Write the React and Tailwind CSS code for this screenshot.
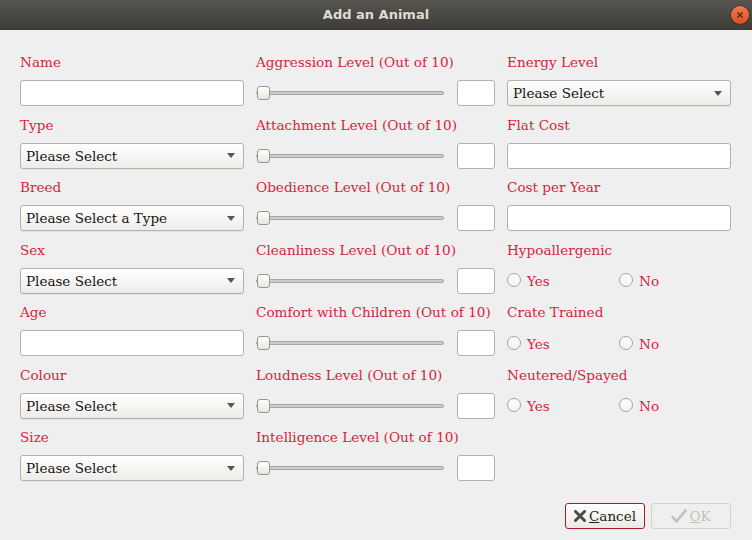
import React from 'react';

const serif = { fontFamily: '"DejaVu Serif", "Liberation Serif", serif' };

const Label = ({ children }) => (
  <div className="h-[18px] text-[13.6px] leading-[18px] text-[#d51f3e] whitespace-nowrap">{children}</div>
);

const TextInput = () => (
  <div className="h-[26px] w-full rounded-[3px] border border-[#b4b1ac] bg-white" />
);

const Select = ({ value = 'Please Select' }) => (
  <div className="flex h-[26px] w-full items-center justify-between rounded-[3px] border border-[#b4b1ac] bg-gradient-to-b from-white to-[#eeece9] pl-[5px] pr-[8px] shadow-[0_1px_0_rgba(0,0,0,0.05)]">
    <span className="pt-[1px] text-[13.5px] text-[#141414]">{value}</span>
    <svg width="8" height="5" viewBox="0 0 8 5">
      <path d="M0 0 L8 0 L4 5 Z" fill="#555" />
    </svg>
  </div>
);

const Slider = () => (
  <div className="flex items-center gap-[13px]">
    <div className="relative flex h-[26px] w-[188px] items-center">
      <div className="h-[4px] w-full rounded-full border border-[#a9a6a1] bg-[#cfccc7]" />
      <div className="absolute left-[1px] top-[6px] h-[14px] w-[13px] rounded-[3px] border border-[#9a968f] bg-gradient-to-b from-white to-[#e8e6e2]" />
    </div>
    <div className="h-[26px] w-[38px] rounded-[3px] border border-[#b4b1ac] bg-white" />
  </div>
);

const Radio = ({ label }) => (
  <div className="flex w-[112px] items-center gap-[6px]">
    <div className="h-[14px] w-[14px] rounded-full border border-[#a6a39e] bg-gradient-to-b from-white to-[#f3f2f0]" />
    <span className="pt-[2px] text-[13.6px] text-[#d51f3e]">{label}</span>
  </div>
);

const Cell = ({ label, children }) => (
  <div className="flex flex-col gap-[9px]">
    <Label>{label}</Label>
    {children}
  </div>
);

const col1 = [
  ['Name', <TextInput />],
  ['Type', <Select />],
  ['Breed', <Select value="Please Select a Type" />],
  ['Sex', <Select />],
  ['Age', <TextInput />],
  ['Colour', <Select />],
  ['Size', <Select />],
];

const col2 = [
  'Aggression Level (Out of 10)',
  'Attachment Level (Out of 10)',
  'Obedience Level (Out of 10)',
  'Cleanliness Level (Out of 10)',
  'Comfort with Children (Out of 10)',
  'Loudness Level (Out of 10)',
  'Intelligence Level (Out of 10)',
];

const radios = (
  <div className="flex h-[26px] items-center">
    <Radio label="Yes" />
    <Radio label="No" />
  </div>
);

const col3 = [
  ['Energy Level', <Select />],
  ['Flat Cost', <TextInput />],
  ['Cost per Year', <TextInput />],
  ['Hypoallergenic', radios],
  ['Crate Trained', radios],
  ['Neutered/Spayed', radios],
];

export default function App() {
  return (
    <div className="h-[540px] w-[752px] overflow-hidden bg-[#efefef]" style={serif}>
      {/* Title bar */}
      <div className="relative flex h-[30px] items-center justify-center bg-gradient-to-b from-[#57554f] to-[#3d3c38]">
        <span
          className="text-[13px] font-bold text-[#dfdbd2]"
          style={{ fontFamily: '"DejaVu Sans", sans-serif' }}
        >
          Add an Animal
        </span>
        <div className="absolute right-[3px] top-[6px] flex h-[18px] w-[18px] items-center justify-center rounded-full bg-gradient-to-b from-[#f37a4c] to-[#dc4a1c] shadow-[0_0_0_1px_rgba(0,0,0,0.25)]">
          <svg width="6" height="6" viewBox="0 0 6 6">
            <path d="M0.5 0.5 L5.5 5.5 M5.5 0.5 L0.5 5.5" stroke="#3a2a22" strokeWidth="1.2" />
          </svg>
        </div>
      </div>

      {/* Form */}
      <div className="px-[20px] pt-[23px]">
        <div className="grid grid-cols-[224px_239px_224px] gap-x-[12px]">
          <div className="flex flex-col">
            {col1.map(([l, c]) => (
              <div key={l} className="h-[62.5px]">
                <Cell label={l}>{c}</Cell>
              </div>
            ))}
          </div>
          <div className="flex flex-col">
            {col2.map((l) => (
              <div key={l} className="h-[62.5px]">
                <Cell label={l}>
                  <Slider />
                </Cell>
              </div>
            ))}
          </div>
          <div className="flex flex-col">
            {col3.map(([l, c]) => (
              <div key={l} className="h-[62.5px]">
                <Cell label={l}>{c}</Cell>
              </div>
            ))}
          </div>
        </div>

        {/* Buttons */}
        <div className="mt-[12px] flex justify-end gap-[6px] pr-[1px]">
          <button className="flex h-[26px] w-[80px] items-center justify-center gap-[3px] rounded-[3px] border border-[#a8192f] bg-gradient-to-b from-white to-[#ebe9e6] text-[13.5px] text-[#1d1d1d]">
            <svg width="12" height="12" viewBox="0 0 12 12">
              <path d="M1.5 1.5 L10.5 10.5 M10.5 1.5 L1.5 10.5" stroke="#4a4a4a" strokeWidth="3" strokeLinecap="round" />
            </svg>
            <span className="pt-[1px]">
              <span className="underline">C</span>ancel
            </span>
          </button>
          <button className="flex h-[26px] w-[80px] items-center justify-center gap-[2px] rounded-[3px] border border-[#d3d1cd] bg-[#efefee] text-[13.5px] text-[#c3c1bd]">
            <svg width="16" height="14" viewBox="0 0 16 14">
              <path d="M1.5 8 L5.5 12.5 L14.5 1.5" fill="none" stroke="#c3c1bd" strokeWidth="2.6" strokeLinecap="round" strokeLinejoin="round" />
            </svg>
            <span className="pt-[1px]">
              <span className="underline">O</span>K
            </span>
          </button>
        </div>
      </div>
    </div>
  );
}
